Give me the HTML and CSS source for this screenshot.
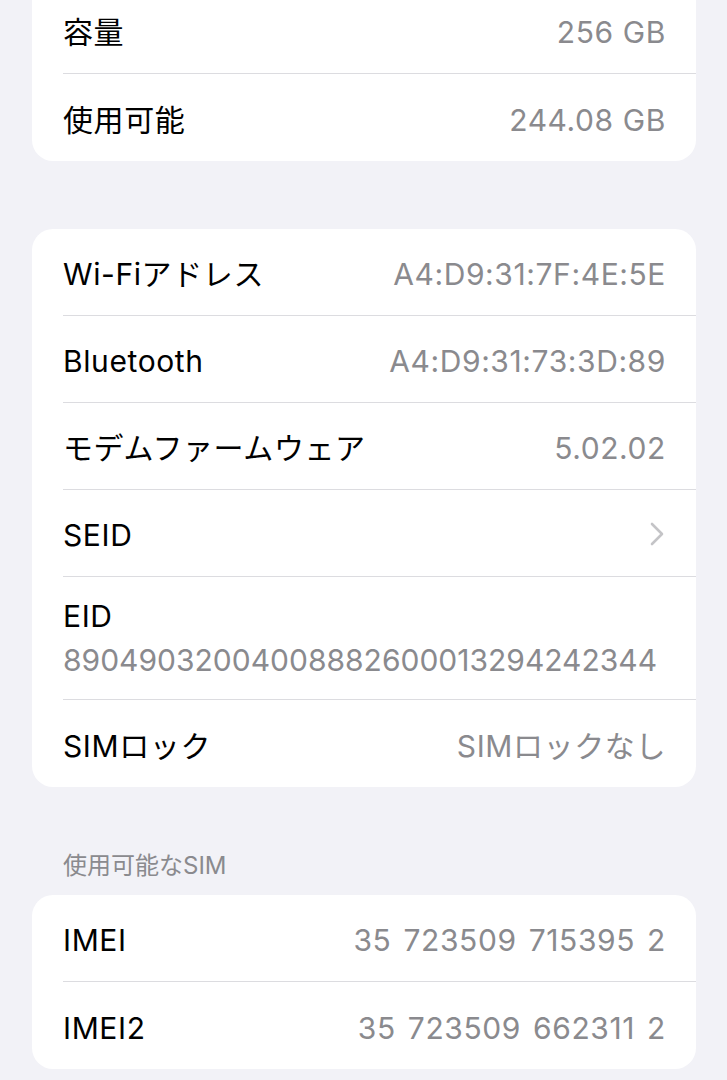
FILE: index.html
```html
<!DOCTYPE html>
<html>
	<head>
		<title>情報</title>
		<meta charset="UTF-8">
		<meta name="viewport" content="width=device-width, initial-scale=1.0">
		<link rel="stylesheet" href="styles.css">
	</head>
	<body>
		<div class="page">

			<!-- 容量 -->
			<div class="card card-top">
				<div class="row">
					<span class="label">容量</span>
					<span class="value">256 GB</span>
				</div>
				<div class="row">
					<span class="label">使用可能</span>
					<span class="value">244.08 GB</span>
				</div>
			</div>

			<!-- アドレス等 -->
			<div class="card">
				<div class="row">
					<span class="label">Wi-Fiアドレス</span>
					<span class="value">A4:D9:31:7F:4E:5E</span>
				</div>
				<div class="row">
					<span class="label">Bluetooth</span>
					<span class="value">A4:D9:31:73:3D:89</span>
				</div>
				<div class="row">
					<span class="label">モデムファームウェア</span>
					<span class="value">5.02.02</span>
				</div>
				<div class="row">
					<span class="label">SEID</span>
					<svg class="chevron" width="14" height="24" viewBox="0 0 14 24">
						<path d="M2 2 L12 12 L2 22" fill="none" stroke="#c4c4c7" stroke-width="2.6" stroke-linecap="round" stroke-linejoin="round"/>
					</svg>
				</div>
				<div class="row row-stack">
					<span class="label">EID</span>
					<span class="value value-eid">89049032004008882600013294242344</span>
				</div>
				<div class="row">
					<span class="label">SIMロック</span>
					<span class="value">SIMロックなし</span>
				</div>
			</div>

			<!-- 使用可能なSIM -->
			<div class="section-title">使用可能なSIM</div>
			<div class="card card-sim">
				<div class="row">
					<span class="label">IMEI</span>
					<span class="value value-imei">35 723509 715395 2</span>
				</div>
				<div class="row">
					<span class="label">IMEI2</span>
					<span class="value value-imei">35 723509 662311 2</span>
				</div>
			</div>

		</div>
	</body>
</html>
```

FILE: styles.css
```css
* {
	margin: 0;
	padding: 0;
	box-sizing: border-box;
}

body {
	background-color: #f2f2f7;
	font-family: Inter, "Noto Sans CJK JP", sans-serif;
	color: #000;
}

.page {
	/* 一番上のカードは画面外から始まる */
	margin-top: -13px;
	padding: 0 31px 0 32px;
}

/* カード */
.card {
	background-color: #fff;
	border-radius: 21px;
	margin-bottom: 68px;
}

.card-top {
	border-top-left-radius: 0;
	border-top-right-radius: 0;
}

.card-sim {
	margin-bottom: 0;
}

/* 行 */
.row {
	display: flex;
	align-items: center;
	justify-content: space-between;
	height: 87px;
	margin-left: 31px;
	padding-top: 4px;
	padding-right: 30px;
	border-bottom: 1px solid #dcdce0;
}

.row:last-child {
	border-bottom: none;
}

.row-stack {
	height: 123px;
	flex-direction: column;
	align-items: flex-start;
	justify-content: flex-start;
	padding-top: 21px;
	gap: 8px;
}

.label {
	font-size: 30px;
	line-height: 36px;
	letter-spacing: 0.6px;
}

.value {
	font-size: 30px;
	line-height: 36px;
	letter-spacing: 0.6px;
	color: #8a8a8e;
}

.value-eid {
	letter-spacing: 0;
}

.value-imei {
	word-spacing: 3px;
}

.chevron {
	display: block;
	margin-right: 2px;
	margin-top: -3px;
}

/* セクション見出し */
.section-title {
	margin: -1px 0 17px 31px;
	font-size: 24px;
	line-height: 24px;
	color: #8a8a8e;
}
```
